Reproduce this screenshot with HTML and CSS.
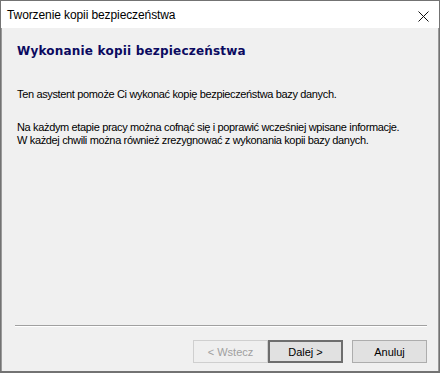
FILE: index.html
```html
<!DOCTYPE html>
<html lang="pl">
<head>
<meta charset="utf-8">
<link rel="stylesheet" href="styles.css">
</head>
<body>
<div class="window">
  <div class="titlebar">
    <span class="title">Tworzenie kopii bezpieczeństwa</span>
    <svg class="close" width="11" height="11" viewBox="0 0 11 11"><path d="M0.5 0.5 L10.5 10.5 M10.5 0.5 L0.5 10.5" stroke="#111" stroke-width="1" fill="none"/></svg>
  </div>
  <div class="client">
    <div class="content">
      <h1 class="heading">Wykonanie kopii bezpieczeństwa</h1>
      <p class="text first">Ten asystent pomoże Ci wykonać kopię bezpieczeństwa bazy danych.</p>
      <p class="text">Na każdym etapie pracy można cofnąć się i poprawić wcześniej wpisane informacje.<br>W każdej chwili można również zrezygnować z wykonania kopii bazy danych.</p>
    </div>
    <div class="separator"></div>
    <div class="buttons">
      <button class="btn disabled">&lt; Wstecz</button>
      <button class="btn default">Dalej &gt;</button>
      <button class="btn cancel">Anuluj</button>
    </div>
  </div>
</div>
</body>
</html>
```
FILE: styles.css
```css
html, body {
  margin: 0;
  padding: 0;
  background: #f0f0f0;
}
.window {
  width: 440px;
  height: 373px;
  box-sizing: border-box;
  border: 1px solid #737373;
  border-bottom-width: 2px;
  display: flex;
  flex-direction: column;
  background: #f0f0f0;
}
.titlebar {
  height: 27px;
  background: #ffffff;
  display: flex;
  align-items: center;
  padding: 0 0 0 6px;
}
.title {
  font-family: "Liberation Sans", Arial, sans-serif;
  font-size: 12px;
  letter-spacing: -0.1px;
  color: #000;
  flex: 1;
}
.close {
  margin-right: 10px;
  margin-top: 3px;
}
.client {
  flex: 1;
  display: flex;
  flex-direction: column;
  border-left: 1px solid #9a9a9a;
  border-right: 1px solid #9a9a9a;
}
.content {
  flex: 1;
  padding: 0 15px;
}
.heading {
  font-family: "DejaVu Sans", Verdana, sans-serif;
  font-weight: bold;
  font-size: 12px;
  color: #0b0a60;
  margin: 16px 0 0 0;
  line-height: 15px;
  letter-spacing: 0.2px;
}
.text {
  font-family: "Liberation Sans", Arial, sans-serif;
  font-size: 11px;
  line-height: 13px;
  letter-spacing: -0.35px;
  white-space: nowrap;
  color: #000;
  margin: 0;
}
.text.first {
  margin-top: 29px;
  margin-bottom: 20px;
}
.separator {
  margin: 0 11px 0 13px;
  height: 1px;
  background: #a0a0a0;
  border-bottom: 1px solid #ffffff;
}
.buttons {
  display: flex;
  justify-content: flex-end;
  padding: 13px 11px 8px 0;
}
.btn {
  width: 75px;
  height: 23px;
  box-sizing: border-box;
  font-family: "Liberation Sans", Arial, sans-serif;
  font-size: 11px;
  background: #e1e1e1;
  border: 1px solid #adadad;
  color: #000;
  padding: 0;
  margin: 0;
}
.btn.disabled {
  color: #a0a0a0;
  background: #efefef;
  border-color: #cfcfcf;
}
.btn.default {
  border: 2px solid #6e6e6e;
}
.btn.cancel {
  margin-left: 9px;
}
```
